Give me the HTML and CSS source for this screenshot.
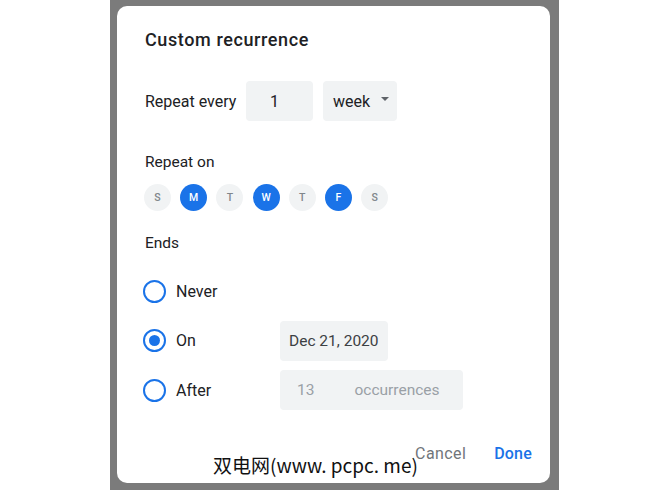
FILE: index.html
```html
<!DOCTYPE html>
<html>
<head>
<meta charset="utf-8">
<link rel="stylesheet" href="styles.css">
</head>
<body>
<div class="page">
  <div class="backdrop">
    <div class="dialog">
      <h1 class="title">Custom recurrence</h1>
      <div class="row every">
        <span class="label">Repeat every</span>
        <div class="field num">1</div>
        <div class="field select">week <span class="caret"></span></div>
      </div>
      <div class="section-label on-label">Repeat on</div>
      <div class="days">
        <span class="day">S</span>
        <span class="day sel">M</span>
        <span class="day">T</span>
        <span class="day sel">W</span>
        <span class="day">T</span>
        <span class="day sel">F</span>
        <span class="day">S</span>
      </div>
      <div class="section-label ends-label">Ends</div>
      <div class="ends">
        <div class="opt"><span class="radio"></span><span class="opt-text">Never</span></div>
        <div></div>
        <div class="opt"><span class="radio checked"></span><span class="opt-text">On</span></div>
        <div class="field date">Dec 21, 2020</div>
        <div class="opt"><span class="radio"></span><span class="opt-text">After</span></div>
        <div class="field occ"><span class="occ-num">13</span><span class="occ-word">occurrences</span></div>
      </div>
      <div class="footer">
        <span class="btn cancel">Cancel</span>
        <span class="btn done">Done</span>
      </div>
      <div class="watermark">双电网(www. pcpc. me)</div>
    </div>
  </div>
</div>
</body>
</html>
```

FILE: styles.css
```css
* { box-sizing: border-box; }
html, body { margin: 0; padding: 0; background: #fff; }
body { font-family: Roboto, "Noto Sans", sans-serif; color: #202124; }
.page { height: 490px; padding-left: 110px; display: flex; }
.backdrop {
  width: 449px; height: 490px; background: #7b7b7b;
  padding: 6px 9px 7px 7px;
}
.dialog {
  position: relative;
  height: 477px; background: #fff; border-radius: 10px;
  padding: 22px 0 0 28px;
}
.title {
  margin: 0; font-size: 18px; line-height: 24px; font-weight: 500;
  letter-spacing: 0.6px; color: #202124;
}
.row { display: flex; align-items: center; }
.every { margin-top: 29px; height: 40px; }
.label { font-size: 16px; color: #202124; width: 101px; }
.field {
  background: #f1f3f4; border-radius: 4px; height: 40px;
  display: flex; align-items: center; font-size: 16px; color: #202124;
}
.num { width: 67px; padding-left: 24px; }
.select { width: 74px; margin-left: 10px; padding-left: 10px; }
.caret {
  display: inline-block; margin-left: 11px; width: 0; height: 0;
  border-left: 4px solid transparent; border-right: 4px solid transparent;
  border-top: 4.5px solid #5f6368; position: relative; top: -2px;
}
.section-label { font-size: 15.5px; line-height: 20px; color: #202124; }
.on-label { margin-top: 31px; }
.days { display: flex; gap: 9.2px; margin-top: 12px; margin-left: -1px; }
.day {
  width: 27px; height: 27px; border-radius: 50%; background: #f1f3f4;
  color: #80868b; font-size: 10.5px; font-weight: 500;
  display: flex; align-items: center; justify-content: center;
}
.day.sel { background: #1a73e8; color: #fff; }
.ends-label { margin-top: 22px; }
.ends {
  margin-top: 18px; display: grid; grid-template-columns: 135px auto;
  grid-auto-rows: 40px; row-gap: 9.5px; justify-items: start;
}
.opt { display: flex; align-items: center; height: 40px; margin-left: -2px; }
.radio {
  width: 23px; height: 23px; border: 2px solid #1a73e8; border-radius: 50%;
  display: flex; align-items: center; justify-content: center;
}
.radio.checked::after {
  content: ""; width: 11px; height: 11px; border-radius: 50%; background: #1a73e8;
}
.opt-text { margin-left: 10px; font-size: 16px; color: #202124; }
.date { padding: 0 9px 0 9px; font-size: 15.5px; color: #3c4043; }
.occ { width: 183px; padding-left: 17px; color: #9aa0a6; font-size: 15.5px; }
.occ-word { margin-left: 40px; }
.footer {
  display: flex; justify-content: flex-end; margin-top: 25px;
  padding-right: 10px; height: 36px; align-items: center;
}
.btn { font-size: 16px; font-weight: 500; padding: 0 8px; letter-spacing: 0.2px; }
.cancel { color: #70757a; margin-right: 12px; font-weight: 400; letter-spacing: 0.4px; }
.done { color: #1a73e8; }
.watermark {
  position: absolute; left: 96px; top: 448px;
  font-family: "Noto Sans CJK SC", sans-serif; font-size: 19px; line-height: 22px;
  color: #111;
}
```
